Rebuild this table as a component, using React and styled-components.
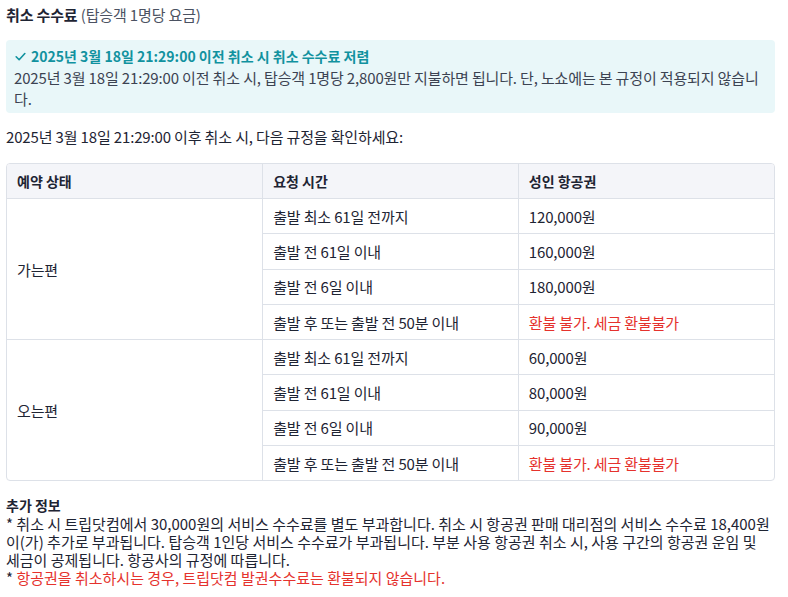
import styled, { createGlobalStyle } from 'styled-components';

const COLOR_TEXT = '#1e2433';
const COLOR_BORDER = '#dde1e8';
const COLOR_RED = '#e5322d';
const COLOR_TEAL = '#11929f';

const GlobalStyle = createGlobalStyle`
  body {
    margin: 0;
    background: #ffffff;
    color: ${COLOR_TEXT};
    font-family: "Noto Sans CJK KR", "Noto Sans", sans-serif;
    font-size: 15px;
    letter-spacing: -0.15px;
  }
`;

const outbound = [
  { time: '출발 최소 61일 전까지', price: '120,000원' },
  { time: '출발 전 61일 이내', price: '160,000원' },
  { time: '출발 전 6일 이내', price: '180,000원' },
  { time: '출발 후 또는 출발 전 50분 이내', price: '환불 불가. 세금 환불불가', red: true },
];

const inbound = [
  { time: '출발 최소 61일 전까지', price: '60,000원' },
  { time: '출발 전 61일 이내', price: '80,000원' },
  { time: '출발 전 6일 이내', price: '90,000원' },
  { time: '출발 후 또는 출발 전 50분 이내', price: '환불 불가. 세금 환불불가', red: true },
];

function CheckIcon() {
  return (
    <svg width="13" height="13" viewBox="0 0 24 24" fill="none" stroke={COLOR_TEAL} strokeWidth="3" strokeLinecap="round" strokeLinejoin="round">
      <polyline points="4 12.5 9.5 18 20 6.5" />
    </svg>
  );
}

function Group({ label, rows }) {
  return rows.map((row, i) => (
    <tr key={row.time + i}>
      {i === 0 ? <Cell rowSpan={rows.length}>{label}</Cell> : null}
      <Cell>{row.time}</Cell>
      <Cell red={row.red}>{row.price}</Cell>
    </tr>
  ));
}

function App() {
  return (
    <Page>
      <GlobalStyle />
      <Title>
        <strong>취소 수수료</strong> <Muted>(탑승객 1명당 요금)</Muted>
      </Title>
      <Callout>
        <CalloutTitle>
          <CheckIcon />
          2025년 3월 18일 21:29:00 이전 취소 시 취소 수수료 저렴
        </CalloutTitle>
        <CalloutBody>
          2025년 3월 18일 21:29:00 이전 취소 시, 탑승객 1명당 2,800원만 지불하면 됩니다. 단, 노쇼에는 본 규정이 적용되지 않습니다.
        </CalloutBody>
      </Callout>
      <Intro>2025년 3월 18일 21:29:00 이후 취소 시, 다음 규정을 확인하세요:</Intro>
      <TableWrap>
        <Table>
          <colgroup>
            <col style={{ width: '33.33%' }} />
            <col style={{ width: '33.33%' }} />
            <col style={{ width: '33.34%' }} />
          </colgroup>
          <thead>
            <tr>
              <HeadCell>예약 상태</HeadCell>
              <HeadCell>요청 시간</HeadCell>
              <HeadCell>성인 항공권</HeadCell>
            </tr>
          </thead>
          <tbody>
            <Group label="가는편" rows={outbound} />
            <Group label="오는편" rows={inbound} />
          </tbody>
        </Table>
      </TableWrap>
      <Notes>
        <NotesTitle>추가 정보</NotesTitle>
        <p>
          * 취소 시 트립닷컴에서 30,000원의 서비스 수수료를 별도 부과합니다. 취소 시 항공권 판매 대리점의 서비스 수수료 18,400원<wbr />이(가) 추가로 부과됩니다. 탑승객 1인당 서비스 수수료가 부과됩니다. 부분 사용 항공권 취소 시, 사용 구간의 항공권 운임 및 세금이 공제됩니다. 항공사의 규정에 따릅니다.
        </p>
        <p>
          * <Warn>항공권을 취소하시는 경우, 트립닷컴 발권수수료는 환불되지 않습니다.</Warn>
        </p>
      </Notes>
    </Page>
  );
}

const Page = styled.div`
  width: 769px;
  padding: 4px 0 0 6px;
  display: flex;
  flex-direction: column;
`;

const Title = styled.div`
  line-height: 22px;
  strong {
    font-weight: 700;
  }
`;

const Muted = styled.span`
  color: #4b5262;
`;

const Callout = styled.div`
  margin-top: 14px;
  background: #e9f7f9;
  border-radius: 4px;
  padding: 6px 8px 4px;
`;

const CalloutTitle = styled.div`
  display: flex;
  align-items: center;
  gap: 4px;
  color: ${COLOR_TEAL};
  font-size: 14px;
  letter-spacing: 0;
  font-weight: 700;
  line-height: 21px;
`;

const CalloutBody = styled.div`
  color: #3c4352;
  line-height: 21px;
`;

const Intro = styled.div`
  margin-top: 14px;
  line-height: 20px;
`;

const TableWrap = styled.div`
  margin-top: 16px;
  border: 1px solid ${COLOR_BORDER};
  border-radius: 4px;
  overflow: hidden;
`;

const Table = styled.table`
  width: 100%;
  border-collapse: collapse;
  table-layout: fixed;
  tr:first-child > * {
    border-top: none;
  }
  tr > *:first-child {
    border-left: none;
  }
  tr > *:last-child {
    border-right: none;
  }
  tbody tr:last-child > td,
  tbody tr:nth-last-child(4) > td[rowspan] {
    border-bottom: none;
  }
`;

const HeadCell = styled.th`
  background: #f4f5f9;
  border: 1px solid ${COLOR_BORDER};
  text-align: left;
  font-size: 14px;
  letter-spacing: 0;
  font-weight: 700;
  height: 34px;
  padding: 0 10px;
`;

const Cell = styled.td`
  border: 1px solid ${COLOR_BORDER};
  height: 34.3px;
  padding: 0 10px;
  color: ${({ red }) => (red ? COLOR_RED : COLOR_TEXT)};
`;

const Notes = styled.div`
  margin-top: 14px;
  line-height: 18px;
  letter-spacing: 0;
  word-break: keep-all;
  p {
    margin: 0;
  }
`;

const NotesTitle = styled.div`
  font-size: 14px;
  font-weight: 700;
  line-height: 20px;
`;

const Warn = styled.span`
  color: ${COLOR_RED};
`;

export default App;
